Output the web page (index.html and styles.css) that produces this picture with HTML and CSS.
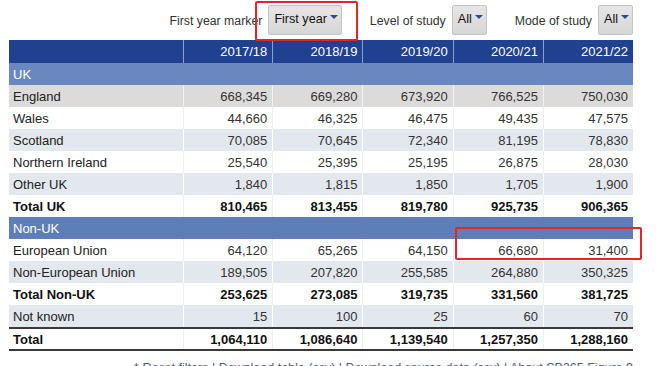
FILE: index.html
```html
<!DOCTYPE html>
<html>
  <head>
    <meta charset='utf-8'/>
    <link rel="stylesheet" href="styles.css">
  </head>
  <body>
    <div class='filters'>
      <span class='filter-label'>First year marker</span>
      <span class='picker'>First year <i class='caret'></i></span>
      <span class='filter-label spaced'>Level of study</span>
      <span class='picker'>All <i class='caret'></i></span>
      <span class='filter-label spaced'>Mode of study</span>
      <span class='picker'>All <i class='caret'></i></span>
    </div>

    <table class='data'>
      <thead>
        <tr>
          <th class='label'></th>
          <th>2017/18</th>
          <th>2018/19</th>
          <th>2019/20</th>
          <th>2020/21</th>
          <th>2021/22</th>
        </tr>
      </thead>
      <tbody>
        <tr class='group uk'><td colspan='6'>UK</td></tr>
        <tr class='hover'><td class='label'>England</td><td>668,345</td><td>669,280</td><td>673,920</td><td>766,525</td><td>750,030</td></tr>
        <tr><td class='label'>Wales</td><td>44,660</td><td>46,325</td><td>46,475</td><td>49,435</td><td>47,575</td></tr>
        <tr class='alt'><td class='label'>Scotland</td><td>70,085</td><td>70,645</td><td>72,340</td><td>81,195</td><td>78,830</td></tr>
        <tr><td class='label'>Northern Ireland</td><td>25,540</td><td>25,395</td><td>25,195</td><td>26,875</td><td>28,030</td></tr>
        <tr class='alt'><td class='label'>Other UK</td><td>1,840</td><td>1,815</td><td>1,850</td><td>1,705</td><td>1,900</td></tr>
        <tr class='subtotal'><td class='label'>Total UK</td><td>810,465</td><td>813,455</td><td>819,780</td><td>925,735</td><td>906,365</td></tr>
        <tr class='group'><td colspan='6'>Non-UK</td></tr>
        <tr><td class='label'>European Union</td><td>64,120</td><td>65,265</td><td>64,150</td><td>66,680</td><td>31,400</td></tr>
        <tr class='alt'><td class='label'>Non-European Union</td><td>189,505</td><td>207,820</td><td>255,585</td><td>264,880</td><td>350,325</td></tr>
        <tr class='subtotal'><td class='label'>Total Non-UK</td><td>253,625</td><td>273,085</td><td>319,735</td><td>331,560</td><td>381,725</td></tr>
        <tr class='alt'><td class='label'>Not known</td><td>15</td><td>100</td><td>25</td><td>60</td><td>70</td></tr>
        <tr class='subtotal grand'><td class='label'>Total</td><td>1,064,110</td><td>1,086,640</td><td>1,139,540</td><td>1,257,350</td><td>1,288,160</td></tr>
      </tbody>
    </table>

    <p class='links'>
      * <a>Reset filters</a> | <a>Download table (csv)</a> | <a>Download source data (csv)</a> | <a>About SB265 Figure 9</a>
    </p>

    <div class='mark mark-filter'></div>
    <div class='mark mark-eu'></div>
  </body>
</html>
```

FILE: styles.css
```css
* {
  font-family: 'Liberation Sans', Arial, sans-serif;
}

body {
  margin: 0;
  color: #222;
  background: #fff;
}

.filters {
  display: flex;
  justify-content: flex-end;
  align-items: center;
  height: 40px;
  padding-right: 27px;
  font-size: 12.3px;
  color: #333;
}

.filter-label {
  margin: 2px 6px 0 0;
}

.filter-label.spaced {
  margin-left: 28px;
}

.picker {
  display: flex;
  align-items: center;
  gap: 3px;
  height: 26px;
  padding: 0 3px 2px 5px;
  background: linear-gradient(#e6e6e6, #d6d6d6);
  border: 1px solid #c4c4c4;
  border-radius: 2px;
  color: #111;
  font-size: 12.6px;
}

.caret {
  width: 0;
  height: 0;
  margin-bottom: 4px;
  border-left: 4px solid transparent;
  border-right: 4px solid transparent;
  border-top: 4px solid #2a4a8a;
}

.data {
  margin-left: 9px;
  width: 624px;
  border-collapse: collapse;
  font-size: 13px;
}

.data th,
.data td {
  height: 22px;
  padding: 0 5px 0 4px;
  text-align: right;
  white-space: nowrap;
  color: #333;
  border-right: 1px solid #eeeeee;
}

.data th {
  height: 23px;
  background: #1f4190;
  color: #fff;
  font-weight: normal;
  border-right: 1px solid #8c9fcd;
}

.data th:last-child,
.data td:last-child {
  border-right: none;
}

.data .label {
  width: 165px;
  text-align: left;
  color: #222;
}

.data tr.alt td {
  background: #e3e7ee;
  border-right-color: #fff;
}

.data tr.hover td {
  background: #dcdbd9;
  border-right-color: #f2f2f2;
}

.data tr.group td {
  background: #5e7eba;
  color: #fff;
  text-align: left;
}

.data tr.group.uk td {
  background: #6a87bf;
}

.data tr.subtotal td {
  font-weight: bold;
  color: #111;
}

.data tr.grand td {
  height: 20px;
  border-top: 2px solid #3a3a3a;
  border-bottom: 2px solid #3a3a3a;
}

.links {
  margin: 10px 27px 0 0;
  text-align: right;
  font-size: 12.5px;
  color: #556;
}

.links a {
  color: #3d5d99;
}

.mark {
  position: absolute;
  border: 2px solid #e32626;
  border-radius: 2px;
}

.mark-filter {
  left: 255px;
  top: 1px;
  width: 99px;
  height: 36px;
}

.mark-eu {
  left: 455px;
  top: 227px;
  width: 183px;
  height: 29px;
}
```
